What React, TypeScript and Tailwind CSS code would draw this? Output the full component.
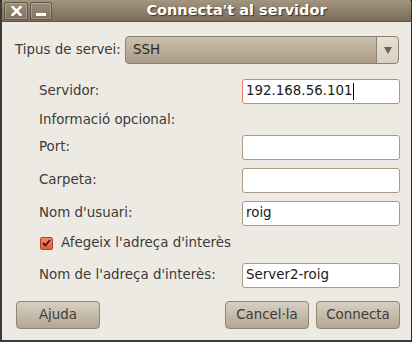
import React from "react";

const font = { fontFamily: '"DejaVu Sans", "Liberation Sans", sans-serif' };

function Field({ value, focused }: { value?: string; focused?: boolean }) {
  return (
    <div
      className={
        "w-[158px] h-[25px] bg-white rounded-[3px] flex items-center px-[3px] text-[13.4px] text-[#1a1a1a] " +
        (focused ? "border border-[#f07a5f]" : "border border-[#a89b88]")
      }
    >
      <span>{value}</span>
      {focused && <span className="w-px h-[17px] bg-black ml-[1px]" />}
    </div>
  );
}

function Row({ label, value, focused, mt }: { label: string; value?: string; focused?: boolean; mt: string }) {
  return (
    <div className={"flex items-center justify-between pl-[37px] pr-[11px] " + mt}>
      <span className="text-[13.4px] text-[#3c3b37]">{label}</span>
      <Field value={value} focused={focused} />
    </div>
  );
}

function Btn({ children, w }: { children: React.ReactNode; w: string }) {
  return (
    <div
      className={
        "h-[28px] rounded-[4px] border border-[#918572] bg-gradient-to-b from-[#d8d0c3] to-[#b3a792] flex items-center justify-center text-[13.4px] text-[#3c3b37] " +
        w
      }
    >
      {children}
    </div>
  );
}

export default function App() {
  return (
    <div className="w-[412px] h-[342px] bg-[#3a2a33] overflow-hidden" style={font}>
      <div className="w-[411px] h-[342px] flex flex-col border-l-2 border-b-2 border-[#3c3b37] bg-[#edeae4] rounded-tl-[3px] rounded-tr-[3px] overflow-hidden">
        {/* title bar */}
        <div className="h-[22px] shrink-0 bg-gradient-to-b from-[#a3967f] via-[#8e806b] to-[#7b6e5c] border-b border-[#5d5244] flex items-center relative">
          <div className="flex gap-[2px] ml-[2px] mt-[1px]">
            <div className="w-[24px] h-[18px] rounded-[2px] border border-[#5f5446] shadow-[inset_0_0_0_1px_rgba(255,255,255,0.25)] flex items-center justify-center bg-gradient-to-b from-[#9a8d78] to-[#7f725f]">
              <svg width="11" height="10" viewBox="0 0 11 10">
                <path d="M1.5 1 L9.5 9 M9.5 1 L1.5 9" stroke="#ffffff" strokeWidth="2.6" strokeLinecap="square" />
              </svg>
            </div>
            <div className="w-[22px] h-[18px] rounded-[2px] border border-[#5f5446] shadow-[inset_0_0_0_1px_rgba(255,255,255,0.25)] flex items-end justify-center pb-[3px] bg-gradient-to-b from-[#9a8d78] to-[#7f725f]">
              <div className="w-[10px] h-[3px] bg-white" />
            </div>
          </div>
          <div className="absolute left-[60px] right-0 top-0 h-[21px] flex items-center justify-center">
            <span className="text-[14.5px] font-bold text-white [text-shadow:1px_1px_1px_#3a3226]">
              Connecta't al servidor
            </span>
          </div>
        </div>

        {/* service type */}
        <div className="flex items-center mt-[14px] pl-[13px] pr-[11px]">
          <span className="text-[13.4px] text-[#3c3b37] w-[110px]">Tipus de servei:</span>
          <div className="w-[274px] h-[28px] rounded-[4px] border border-[#8e826f] bg-gradient-to-b from-[#cbc0af] to-[#a99c87] flex items-center">
            <span className="flex-1 pl-[7px] text-[13.4px] text-[#2d2a25]">SSH</span>
            <div className="w-[22px] h-full border-l border-[#8e826f] flex items-center justify-center bg-gradient-to-b from-[#e6e0d6] to-[#d8d0c3] rounded-r-[4px]">
              <svg width="8" height="7" viewBox="0 0 8 7">
                <path d="M0 0 H8 L4 7 Z" fill="#6a6055" />
              </svg>
            </div>
          </div>
        </div>

        <Row label="Servidor:" value="192.168.56.101" focused mt="mt-[15px]" />
        <div className="pl-[37px] mt-[6px] text-[13.4px] text-[#3c3b37] h-[20px] flex items-center">
          Informació opcional:
        </div>
        <Row label="Port:" mt="mt-[5px]" />
        <Row label="Carpeta:" mt="mt-[8px]" />
        <Row label="Nom d'usuari:" value="roig" mt="mt-[8px]" />

        {/* checkbox */}
        <div className="flex items-center pl-[38px] mt-[7px] h-[20px]">
          <div className="w-[13px] h-[13px] rounded-[2px] border border-[#b5412c] bg-gradient-to-b from-[#f28a6c] to-[#df5a3b] flex items-center justify-center">
            <svg width="9" height="8" viewBox="0 0 9 8">
              <path d="M1 4 L3.5 6.5 L8 1" stroke="#2a2320" strokeWidth="1.8" fill="none" />
            </svg>
          </div>
          <span className="ml-[8px] text-[13.4px] text-[#3c3b37]">Afegeix l'adreça d'interès</span>
        </div>

        <Row label="Nom de l'adreça d'interès:" value="Server2-roig" mt="mt-[10px]" />

        {/* buttons */}
        <div className="flex items-center mt-[13px] pl-[14px] pr-[11px]">
          <Btn w="w-[84px]">Ajuda</Btn>
          <div className="flex-1" />
          <Btn w="w-[84px]">Cancel·la</Btn>
          <div className="w-[7px]" />
          <Btn w="w-[84px]">Connecta</Btn>
        </div>
      </div>
    </div>
  );
}
